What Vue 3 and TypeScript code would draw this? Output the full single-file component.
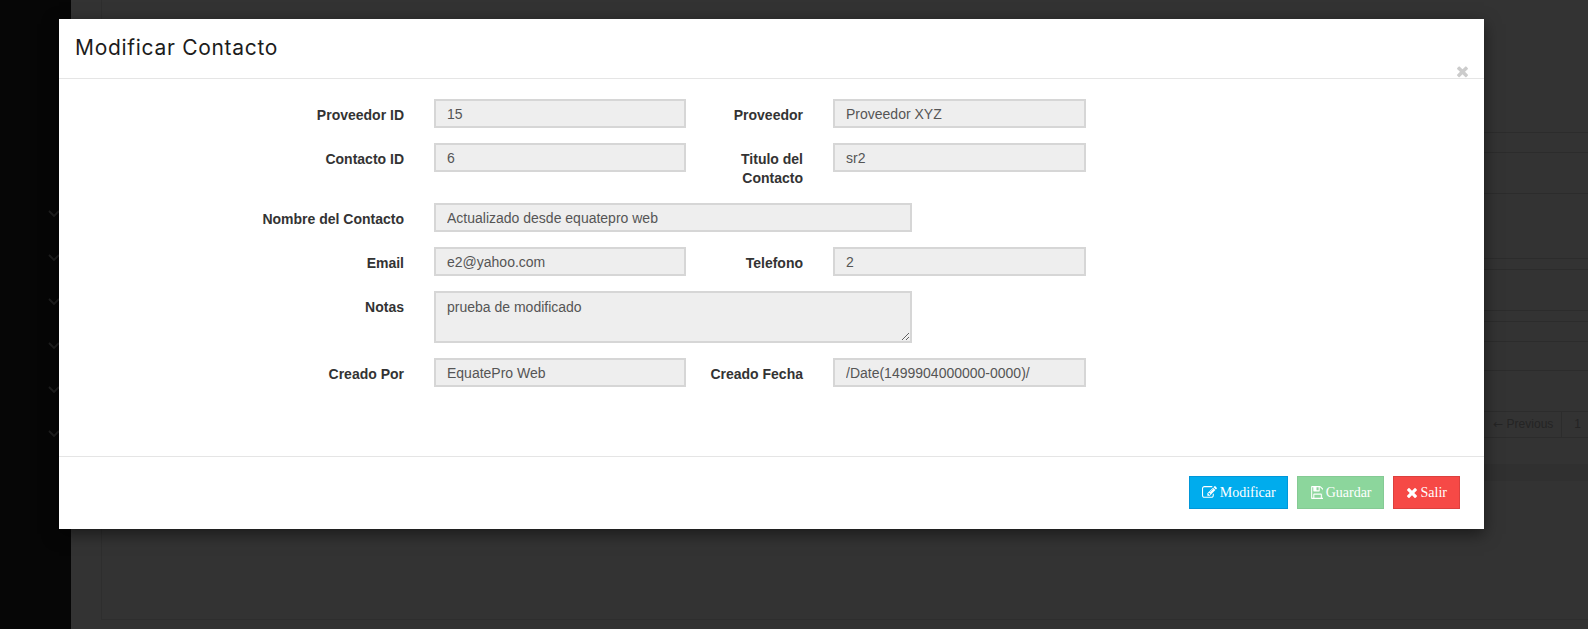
<script setup lang="ts">
interface Field {
  label: string
  value: string
  kind?: 'wide' | 'area'
}

const rows: Field[][] = [
  [
    { label: 'Proveedor ID', value: '15' },
    { label: 'Proveedor', value: 'Proveedor XYZ' }
  ],
  [
    { label: 'Contacto ID', value: '6' },
    { label: 'Titulo del Contacto', value: 'sr2' }
  ],
  [{ label: 'Nombre del Contacto', value: 'Actualizado desde equatepro web', kind: 'wide' }],
  [
    { label: 'Email', value: 'e2@yahoo.com' },
    { label: 'Telefono', value: '2' }
  ],
  [{ label: 'Notas', value: 'prueba de modificado', kind: 'area' }],
  [
    { label: 'Creado Por', value: 'EquatePro Web' },
    { label: 'Creado Fecha', value: '/Date(1499904000000-0000)/' }
  ]
]

// bottom edge of each table row behind the backdrop
const rowEnds = [133, 153, 194, 259, 270, 311, 322, 342, 371, 412]
const tableRows = rowEnds.map((end, i) => end - (i ? rowEnds[i - 1] : 0))

const chevrons = [1, 2, 3, 4, 5, 6]
</script>

<template>
  <div class="page">
    <aside class="sidebar">
      <svg v-for="c in chevrons" :key="c" class="chevron" viewBox="0 0 12 7" fill="none">
        <path d="M1 1l5 5 5-5" stroke="currentColor" stroke-width="1.8" />
      </svg>
    </aside>

    <main class="content">
      <div class="panel">
        <div v-for="(h, i) in tableRows" :key="i" class="table-row" :style="{ height: h + 'px' }"></div>
        <div class="pager">
          <span class="pager-item pager-prev"><span class="pager-arrow">←</span> Previous</span>
          <span class="pager-item">1</span>
        </div>
        <div class="panel-foot"></div>
      </div>
    </main>

    <div class="overlay">
      <section class="modal">
        <header class="modal-header">
          <h4 class="modal-title">Modificar Contacto</h4>
          <svg class="close" viewBox="0 0 1408 1792" aria-hidden="true">
            <path
              fill="currentColor"
              d="M1298 1322q0 40-28 68l-136 136q-28 28-68 28t-68-28l-294-294-294 294q-28 28-68 28t-68-28l-136-136q-28-28-28-68t28-68l294-294-294-294q-28-28-28-68t28-68l136-136q28-28 68-28t68 28l294 294 294-294q28-28 68-28t68 28l136 136q28 28 28 68t-28 68l-294 294 294 294q28 28 28 68z"
            />
          </svg>
        </header>

        <form class="modal-body">
          <div v-for="(row, r) in rows" :key="r" class="form-row">
            <template v-for="(field, f) in row" :key="field.label">
              <label class="form-label" :class="{ 'form-label-second': f === 1 }">{{ field.label }}</label>
              <textarea v-if="field.kind === 'area'" class="form-input form-wide form-area" readonly :value="field.value"></textarea>
              <input
                v-else
                class="form-input"
                :class="{ 'form-wide': field.kind === 'wide', 'form-input-second': f === 1 }"
                readonly
                :value="field.value"
              />
            </template>
          </div>
        </form>

        <footer class="modal-footer">
          <button type="button" class="btn btn-info">
            <svg class="btn-icon" width="15" height="15" viewBox="0 0 1792 1792" aria-hidden="true">
              <path
                fill="currentColor"
                d="M888 1184l116-116-152-152-116 116v56h96v96h56zm440-720q-16-16-33 1l-350 350q-17 17-1 33t33-1l350-350q17-17 1-33zm80 594v190q0 119-84.5 203.5t-203.5 84.5h-832q-119 0-203.5-84.5t-84.5-203.5v-832q0-119 84.5-203.5t203.5-84.5h832q63 0 117 25 15 7 18 23 3 17-9 29l-49 49q-14 14-32 8-23-6-45-6h-832q-66 0-113 47t-47 113v832q0 66 47 113t113 47h832q66 0 113-47t47-113v-126q0-13 9-22l64-64q15-15 35-7t20 29zm-96-738l288 288-672 672h-288v-288zm444 132l-92 92-288-288 92-92q28-28 68-28t68 28l152 152q28 28 28 68t-28 68z"
              />
            </svg>
            Modificar
          </button>
          <button type="button" class="btn btn-success">
            <svg class="btn-icon" width="13" height="15" viewBox="0 0 1536 1792" aria-hidden="true">
              <path
                fill="currentColor"
                d="M512 1536h768v-384h-768v384zm896 0h128v-896q0-14-10-38.5t-20-34.5l-281-281q-10-10-34-20t-39-10v416q0 40-28 68t-68 28h-576q-40 0-68-28t-28-68v-416h-128v1280h128v-416q0-40 28-68t68-28h832q40 0 68 28t28 68v416zm-384-928v-320q0-13-9.5-22.5t-22.5-9.5h-192q-13 0-22.5 9.5t-9.5 22.5v320q0 13 9.5 22.5t22.5 9.5h192q13 0 22.5-9.5t9.5-22.5zm640 32v928q0 40-28 68t-68 28h-1344q-40 0-68-28t-28-68v-1344q0-40 28-68t68-28h928q40 0 88 20t76 48l280 280q28 28 48 76t20 88z"
              />
            </svg>
            Guardar
          </button>
          <button type="button" class="btn btn-danger">
            <svg class="btn-icon" width="12" height="15" viewBox="0 0 1408 1792" aria-hidden="true">
              <path
                fill="currentColor"
                d="M1298 1322q0 40-28 68l-136 136q-28 28-68 28t-68-28l-294-294-294 294q-28 28-68 28t-68-28l-136-136q-28-28-28-68t28-68l294-294-294-294q-28-28-28-68t28-68l136-136q28-28 68-28t68 28l294 294 294-294q28-28 68-28t68 28l136 136q28 28 28 68t-28 68l-294 294 294 294q28 28 28 68z"
              />
            </svg>
            Salir
          </button>
        </footer>
      </section>
    </div>
  </div>
</template>

<style scoped>
.page {
  position: relative;
  display: flex;
  width: 1588px;
  height: 629px;
  overflow: hidden;
  background: #333333;
  font-family: 'Liberation Sans', Arial, sans-serif;
}

.sidebar {
  flex: 0 0 71px;
  display: flex;
  flex-direction: column;
  align-items: flex-end;
  gap: 37px;
  padding: 210px 11px 0 0;
  box-sizing: border-box;
  background: #060606;
  color: #1f1f1f;
}

.chevron {
  width: 12px;
  height: 7px;
  flex: 0 0 auto;
}

.content {
  flex: 1;
  min-width: 0;
  padding: 0 0 9px 30px;
  box-sizing: border-box;
}

.panel {
  display: flex;
  flex-direction: column;
  height: 100%;
  border-left: 1px solid #2e2e2e;
  border-bottom: 1px solid #2e2e2e;
  box-sizing: border-box;
}

.table-row {
  flex: 0 0 auto;
  box-sizing: border-box;
  border-bottom: 1px solid #2c2c2c;
}

.pager {
  flex: 0 0 25px;
  display: flex;
  justify-content: flex-end;
  color: #242424;
  font-size: 12px;
  line-height: 25px;
  border-bottom: 1px solid #2c2c2c;
  box-sizing: border-box;
}

.pager-item {
  padding: 0 7px 0 12px;
}

.pager-prev {
  padding: 0 8px 0 0;
  border-right: 1px solid #2c2c2c;
}

.pager-arrow {
  font-family: 'DejaVu Sans', sans-serif;
}

.panel-foot {
  flex: 0 0 17px;
  margin-top: 26px;
  background: #303030;
}

.overlay {
  position: absolute;
  inset: 0;
  display: flex;
  align-items: flex-start;
  padding: 19px 0 0 59px;
  box-sizing: border-box;
}

.modal {
  position: relative;
  width: 1425px;
  background: #ffffff;
  box-shadow: 0 5px 15px rgba(0, 0, 0, 0.5);
}

.modal-header {
  height: 60px;
  padding: 0 16px 2px;
  box-sizing: border-box;
  border-bottom: 1px solid #e5e5e5;
  display: flex;
  align-items: center;
}

.modal-title {
  margin: 0;
  font-family: Inter, 'Noto Sans', sans-serif;
  font-size: 21px;
  font-weight: 400;
  letter-spacing: 0.7px;
  color: #1c1c1c;
}

.close {
  position: absolute;
  top: 44px;
  right: 15px;
  width: 13px;
  height: 16.5px;
  color: #cccccc;
}

.modal-body {
  display: flex;
  flex-direction: column;
  gap: 15px;
  padding: 20px 0 69px;
}

.form-row {
  display: flex;
  align-items: flex-start;
}

.form-label {
  width: 345px;
  flex: 0 0 auto;
  margin-right: 30px;
  padding-top: 7px;
  font-size: 14px;
  font-weight: 700;
  line-height: 19px;
  text-align: right;
  color: #333333;
}

.form-label-second {
  width: 99px;
}

.form-input {
  width: 252px;
  height: 29px;
  flex: 0 0 auto;
  margin: 0 18px 0 0;
  padding: 0 11px;
  box-sizing: border-box;
  border: 2px solid #d6d6d6;
  border-radius: 0;
  outline: none;
  background: #eeeeee;
  color: #555555;
  font-family: 'Liberation Sans', Arial, sans-serif;
  font-size: 14px;
  line-height: 20px;
}

.form-input-second {
  width: 253px;
  margin-right: 0;
}

.form-wide {
  width: 478px;
}

.form-area {
  display: block;
  height: 52px;
  padding: 4px 11px;
  resize: both;
}

.modal-footer {
  display: flex;
  justify-content: flex-end;
  gap: 9px;
  padding: 19px 24px 20px 0;
  border-top: 1px solid #e5e5e5;
}

.btn {
  height: 33px;
  display: inline-flex;
  align-items: center;
  gap: 3px;
  padding: 0 12px;
  box-sizing: border-box;
  border: 1px solid transparent;
  border-radius: 0;
  color: #ffffff;
  font-family: 'Liberation Serif', 'Times New Roman', serif;
  font-size: 14px;
}

.btn-icon {
  flex: 0 0 auto;
}

.btn-info {
  padding-right: 11px;
  background: #00aced;
  border-color: #0097d9;
}

.btn-success {
  padding-right: 11px;
  background: #8cd69c;
  border-color: #85ca94;
}

.btn-danger {
  background: #f64946;
  border-color: #dc403e;
}
</style>

<style>
html,
body {
  margin: 0;
  background: #333333;
  overflow: hidden;
}
</style>
